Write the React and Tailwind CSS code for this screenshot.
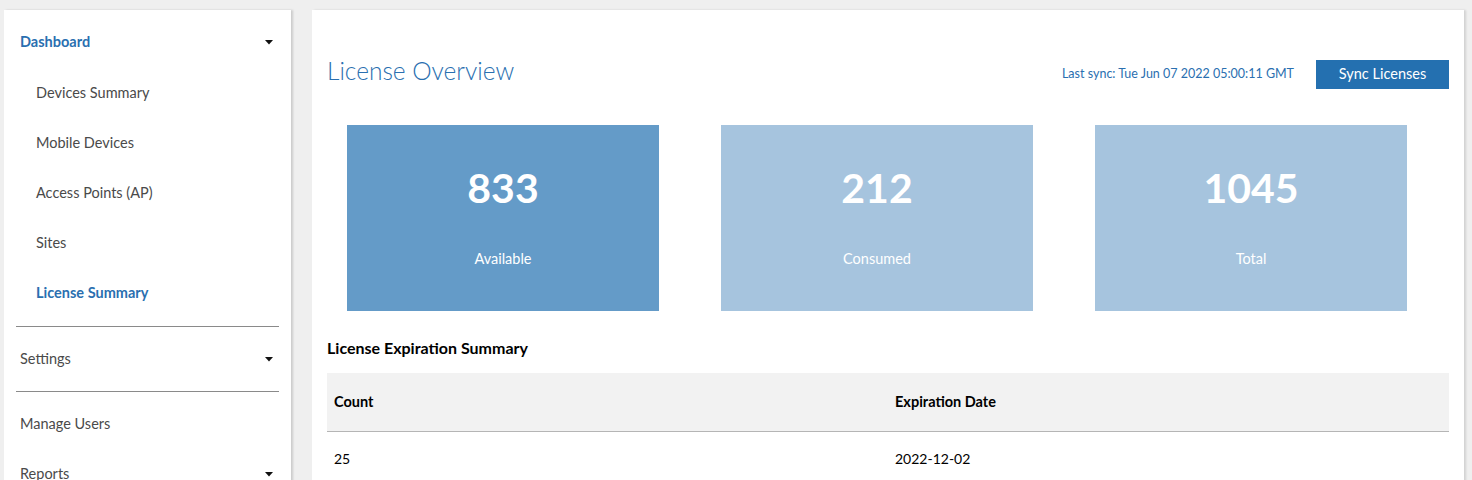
import React from "react";

function Caret() {
  return (
    <svg width="8" height="5" viewBox="0 0 8 5" className="shrink-0">
      <path d="M0 0 L8 0 L4 4.5 Z" fill="#111" />
    </svg>
  );
}

const subItems = ["Devices Summary", "Mobile Devices", "Access Points (AP)", "Sites"];

function StatCard({ value, label, bg }) {
  return (
    <div className="pl-[20px] pr-[42px]">
      <div className={`h-[186px] ${bg} flex flex-col items-center text-white`}>
        <div className="mt-[43px] text-[41px] leading-[40px] font-bold">{value}</div>
        <div className="mt-[43px] text-[14.5px] leading-[16px]">{label}</div>
      </div>
    </div>
  );
}

export default function App() {
  return (
    <div
      className="w-[1472px] h-[480px] overflow-hidden bg-[#efefef] flex items-start pt-[10px] pl-[4px] gap-[21px]"
      style={{ fontFamily: "Lato, 'Open Sans', sans-serif" }}
    >
      <aside className="w-[287px] h-[500px] bg-white shadow-[2px_0_2px_rgba(0,0,0,0.15)] px-[12px] shrink-0">
        <div className="h-[52px] mt-[6px] flex items-center justify-between pl-[4px] pr-[6px]">
          <span className="text-[14.5px] font-bold text-[#2a6fb0]">Dashboard</span>
          <Caret />
        </div>
        {subItems.map((s) => (
          <div key={s} className="h-[50px] flex items-center pl-[20px] text-[14.5px] text-[#4a4a4a]">
            {s}
          </div>
        ))}
        <div className="h-[51px] flex items-center pl-[20px] text-[14.5px] font-bold text-[#2a6fb0] pb-[1px]">
          License Summary
        </div>
        <div className="border-t border-[#8a8a8a] mt-[7px]" />
        <div className="h-[64px] flex items-center justify-between pl-[4px] pr-[6px]">
          <span className="text-[14.5px] text-[#4a4a4a]">Settings</span>
          <Caret />
        </div>
        <div className="border-t border-[#8a8a8a]" />
        <div className="h-[64px] flex items-center pl-[4px] text-[14.5px] text-[#4a4a4a]">Manage Users</div>
        <div className="h-[36px] flex items-center justify-between pl-[4px] pr-[6px]">
          <span className="text-[14.5px] text-[#4a4a4a] leading-[18px]">Reports</span>
          <Caret />
        </div>
      </aside>

      <main className="w-[1152px] h-[500px] bg-white shadow-[2px_0_2px_rgba(0,0,0,0.12)] px-[15px] shrink-0">
        <div className="flex items-center justify-between mt-[39px] h-[50px]">
          <h1 className="text-[24.5px] font-light text-[#2a6fb0] leading-[28px] -mt-[7px]">License Overview</h1>
          <div className="flex items-center gap-[22px]">
            <span className="text-[12.5px] text-[#2a6fb0]">Last sync: Tue Jun 07 2022 05:00:11 GMT</span>
            <button className="w-[133px] h-[29px] bg-[#2470b0] text-white text-[14.5px]">Sync Licenses</button>
          </div>
        </div>
        <div className="grid grid-cols-3 mt-[26px]">
          <StatCard value="833" label="Available" bg="bg-[#649bc8]" />
          <StatCard value="212" label="Consumed" bg="bg-[#a6c4de]" />
          <StatCard value="1045" label="Total" bg="bg-[#a6c4de]" />
        </div>
        <div className="mt-[28px] text-[16px] font-bold text-black leading-[18px]">License Expiration Summary</div>
        <table className="w-full mt-[16px] text-[14px] text-black">
          <thead>
            <tr className="bg-[#f2f2f2] border-b border-[#b5b5b5] h-[58px]">
              <th className="text-left font-bold pl-[7px] w-1/2 text-[14.5px]">Count</th>
              <th className="text-left font-bold pl-[7px] text-[14.5px]">Expiration Date</th>
            </tr>
          </thead>
          <tbody>
            <tr className="h-[56px]">
              <td className="pl-[7px] pb-[2px]">25</td>
              <td className="pl-[7px] pb-[2px]">2022-12-02</td>
            </tr>
          </tbody>
        </table>
      </main>
    </div>
  );
}
